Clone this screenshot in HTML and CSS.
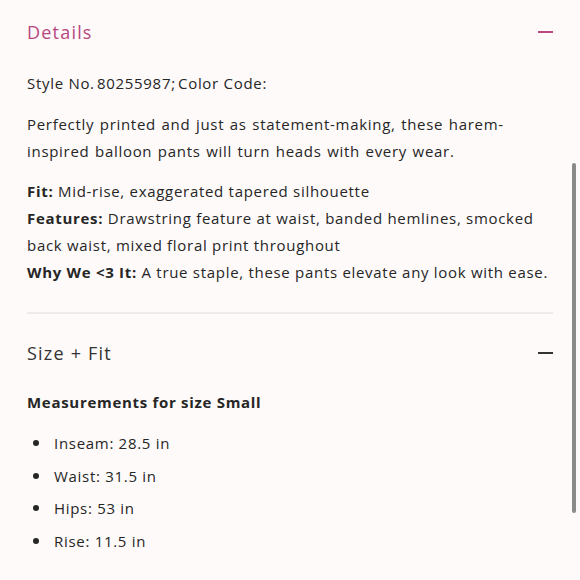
FILE: index.html
```html
<!DOCTYPE html>
<html lang="en">
<head>
<meta charset="utf-8">
<link rel="stylesheet" href="styles.css">
</head>
<body>
<div class="page">
  <section class="panel">
    <div class="panel-head">
      <h2 class="panel-title pink">Details</h2>
      <span class="minus pink-bar"></span>
    </div>
    <div class="panel-body">
      <p class="style-no">Style No.&#8202;80255987;&#8202;Color Code:</p>
      <p class="desc">Perfectly printed and just as statement-making, these harem-inspired balloon pants will turn heads with every wear.</p>
      <p class="specs"><b>Fit:</b> Mid-rise, exaggerated tapered silhouette<br><b>Features:</b> Drawstring feature at waist, banded hemlines, smocked back waist, mixed floral print throughout<br><b>Why We &lt;3 It:</b> A true staple, these pants elevate any look with ease.</p>
    </div>
  </section>
  <hr class="divider">
  <section class="panel">
    <div class="panel-head size-head">
      <h2 class="panel-title">Size + Fit</h2>
      <span class="minus dark-bar"></span>
    </div>
    <div class="panel-body">
      <h3 class="meas">Measurements for size Small</h3>
      <ul class="list">
        <li>Inseam: 28.5 in</li>
        <li>Waist: 31.5 in</li>
        <li>Hips: 53 in</li>
        <li>Rise: 11.5 in</li>
      </ul>
    </div>
  </section>
  <div class="scrollbar"></div>
</div>
</body>
</html>
```

FILE: styles.css
```css
html, body {
  margin: 0;
  padding: 0;
  background: #fdfaf9;
}
body {
  font-family: "Open Sans", "Liberation Sans", sans-serif;
  color: #262626;
  font-size: 15px;
  letter-spacing: 0.7px;
}
.page {
  position: relative;
  height: 580px;
  overflow: hidden;
  padding: 0 27px;
}
.panel-head {
  display: flex;
  align-items: center;
  justify-content: space-between;
  height: 64px;
}
.panel-title {
  margin: 0;
  font-weight: 400;
  font-size: 18px;
  letter-spacing: 1.2px;
  color: #333;
}
.pink { color: #b8467f; }
.minus {
  display: block;
  width: 15px;
  height: 1.5px;
}
.pink-bar { background: #b8467f; }
.dark-bar { background: #333; }
.panel-body p {
  margin: 0;
  line-height: 27px;
}
.style-no { margin-top: 6px !important; }
.desc { margin-top: 14px !important; word-spacing: 1px; }
.specs { margin-top: 13px !important; }
.specs b { font-weight: 700; }
.divider {
  border: 0;
  height: 2px;
  background: #eeebea;
  margin: 26px 0 0;
}
.size-head { height: 78px; }
.meas {
  margin: 0;
  font-size: 15px;
  font-weight: 700;
  letter-spacing: 0.7px;
  line-height: 22px;
  position: relative;
  top: -1px;
}
.list {
  list-style: none;
  margin: 13px 0 0;
  padding: 0;
}
.list li {
  display: flex;
  align-items: center;
  line-height: 32.5px;
}
.list li::before {
  content: "";
  width: 6px;
  height: 6px;
  border-radius: 50%;
  background: #262626;
  margin: 0 15px 0 6px;
}
.scrollbar {
  position: absolute;
  right: 4px;
  top: 163px;
  width: 4px;
  height: 350px;
  border-radius: 2px;
  background: #8a8a8a;
}
```
